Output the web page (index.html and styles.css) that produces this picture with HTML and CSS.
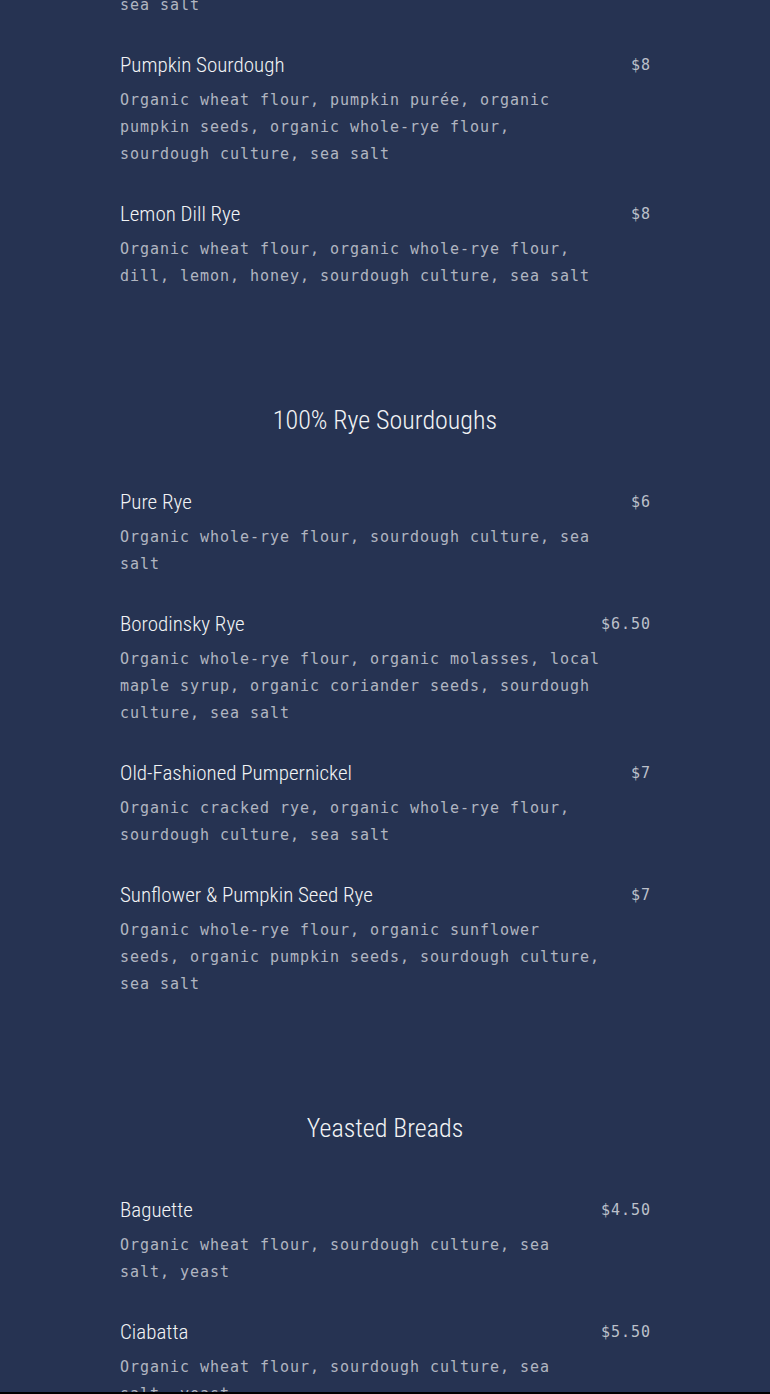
FILE: index.html
```html
<!DOCTYPE html>
<html lang="en">
<head>
<meta charset="utf-8">
<title>Menu</title>
<link rel="stylesheet" href="styles.css">
</head>
<body>
<main class="menu">
  <section class="section section--first">
    <div class="items">
      <article class="item">
        <p class="item-desc item-desc--tail">sea salt</p>
      </article>
      <article class="item">
        <h3 class="item-name">Pumpkin Sourdough</h3>
        <span class="item-price">$8</span>
        <p class="item-desc">Organic wheat flour, pumpkin purée, organic pumpkin seeds, organic whole-rye flour, sourdough culture, sea salt</p>
      </article>
      <article class="item">
        <h3 class="item-name">Lemon Dill Rye</h3>
        <span class="item-price">$8</span>
        <p class="item-desc">Organic wheat flour, organic whole-rye flour, dill, lemon, honey, sourdough culture, sea salt</p>
      </article>
    </div>
  </section>

  <section class="section">
    <h2 class="section-title">100% Rye Sourdoughs</h2>
    <div class="items">
      <article class="item">
        <h3 class="item-name">Pure Rye</h3>
        <span class="item-price">$6</span>
        <p class="item-desc">Organic whole-rye flour, sourdough culture, sea salt</p>
      </article>
      <article class="item">
        <h3 class="item-name">Borodinsky Rye</h3>
        <span class="item-price">$6.50</span>
        <p class="item-desc">Organic whole-rye flour, organic molasses, local maple syrup, organic coriander seeds, sourdough culture, sea salt</p>
      </article>
      <article class="item">
        <h3 class="item-name">Old-Fashioned Pumpernickel</h3>
        <span class="item-price">$7</span>
        <p class="item-desc">Organic cracked rye, organic whole-rye flour, sourdough culture, sea salt</p>
      </article>
      <article class="item">
        <h3 class="item-name">Sunflower &amp; Pumpkin Seed Rye</h3>
        <span class="item-price">$7</span>
        <p class="item-desc">Organic whole-rye flour, organic sunflower seeds, organic pumpkin seeds, sourdough culture, sea salt</p>
      </article>
    </div>
  </section>

  <section class="section">
    <h2 class="section-title">Yeasted Breads</h2>
    <div class="items">
      <article class="item">
        <h3 class="item-name">Baguette</h3>
        <span class="item-price">$4.50</span>
        <p class="item-desc">Organic wheat flour, sourdough culture, sea salt, yeast</p>
      </article>
      <article class="item">
        <h3 class="item-name">Ciabatta</h3>
        <span class="item-price">$5.50</span>
        <p class="item-desc">Organic wheat flour, sourdough culture, sea salt, yeast</p>
      </article>
    </div>
  </section>
</main>
</body>
</html>
```

FILE: styles.css
```css
html, body {
  margin: 0;
  padding: 0;
}

html {
  background: #000;
}

body {
  background: #263352;
  color: #f2f2f2;
  height: 1392px;
  overflow: hidden;
}

.menu {
  width: 530px;
  margin: -8px auto 0;
}

.section-title {
  margin: 112px 0 50px;
  font-family: "Roboto Condensed", "Liberation Sans Narrow", "DejaVu Sans Condensed", sans-serif;
  font-weight: 300;
  font-size: 26px;
  line-height: 36px;
  text-align: center;
  color: #f2f3f5;
}

.items {
  display: flex;
  flex-direction: column;
  gap: 32px;
}

.item {
  display: grid;
  grid-template-columns: 1fr auto;
  align-items: center;
}

.item-name {
  margin: 0;
  font-family: "Roboto Condensed", "Liberation Sans Narrow", "DejaVu Sans Condensed", sans-serif;
  font-weight: 300;
  font-size: 21px;
  line-height: 28px;
  color: #f2f3f5;
}

.item-price {
  font-family: "DejaVu Sans Mono", monospace;
  font-size: 15px;
  letter-spacing: 0.97px;
  line-height: 28px;
  color: #bcc0ca;
  margin-right: -1px;
}

.item-desc {
  grid-column: 1 / -1;
  max-width: 486px;
  margin: 8px 0 0;
  font-family: "DejaVu Sans Mono", monospace;
  font-size: 15px;
  letter-spacing: 0.97px;
  line-height: 27px;
  color: #b1b6c1;
}

.item-desc--tail {
  margin-top: 0;
}
```
